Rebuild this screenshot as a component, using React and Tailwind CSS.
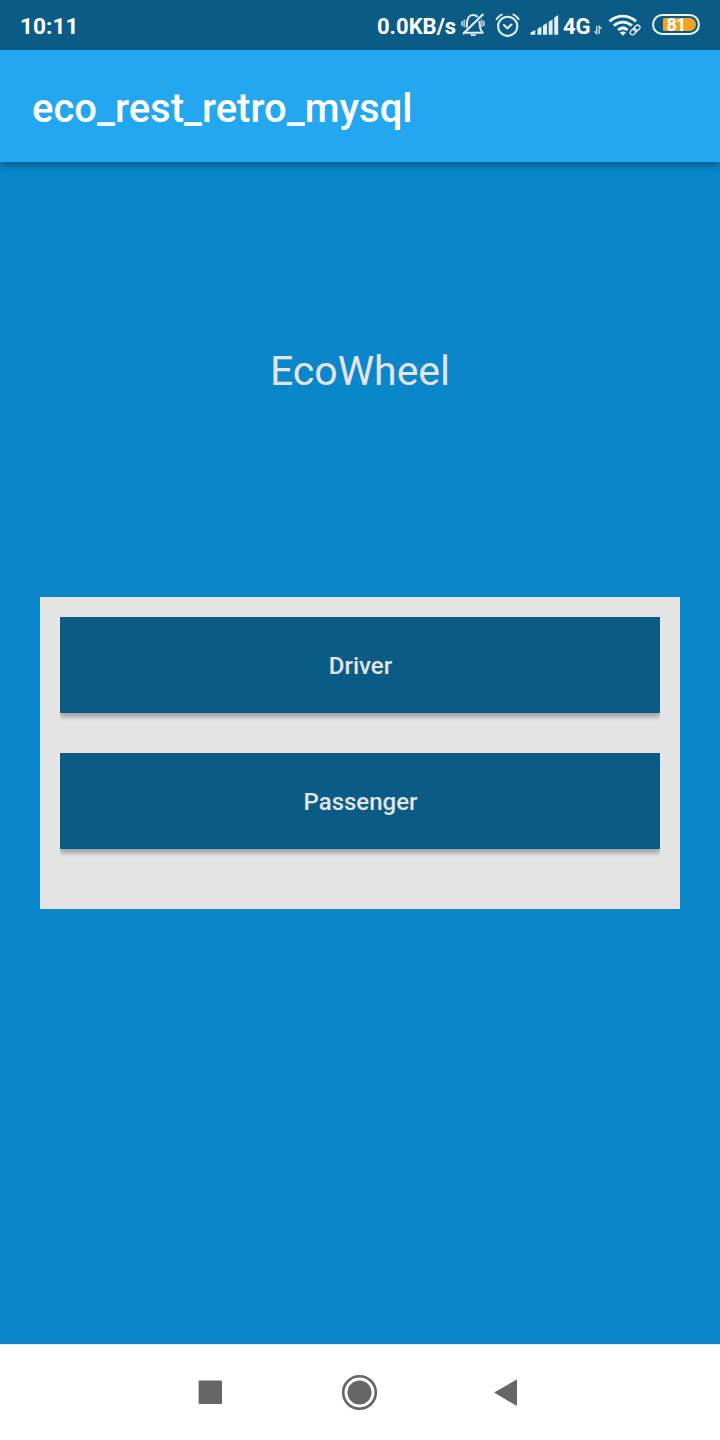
function StatusBar() {
  return (
    <div className="flex h-[50px] shrink-0 bg-[#0a5c87] pl-5 text-[22px] leading-[54px] font-bold text-white">
      <span className="w-[357px] text-[22.7px]">10:11</span>
      <span className="w-[83px] whitespace-nowrap">0.0KB/s</span>
      <svg className="h-[50px] w-[30px] shrink-0" viewBox="460 0 30 50" fill="none" stroke="#e2edf4">
        <path d="M463.5 32.8h20M466.6 28c.6-2.5.3-4.500.5-6.500.4-4.100 3-6.600 6.200-6.600 1.800 0 3.300.7 4.400 2M479.400 21c.5 4-.2 8.500 3.200 11.500" strokeWidth="2" />
        <path d="M463 34 483.300 14" strokeWidth="2.200" />
        <path d="M462 21v5M464.300 19.500v7.500M481.700 19.500v7.500M484 21v5" strokeWidth="1.900" opacity=".7" />
        <path d="M470 34.200h6.500l-1.200 1.900h-4.100z" fill="#e2edf4" stroke="none" />
      </svg>
      <svg className="h-[50px] w-[40px] shrink-0" viewBox="490 0 40 50" fill="none" stroke="#e2edf4" strokeWidth="2.1" strokeLinecap="round">
        <circle cx="507.7" cy="26.3" r="9.6" />
        <path d="m504 25 3.5 3.2 4-3.7M496.7 19c1.3-2 3-3.5 5-4.4M513.5 14.6c2 .9 3.7 2.4 5 4.4" />
      </svg>
      <svg className="h-[50px] w-[33px] shrink-0" viewBox="530 0 33 50" fill="#e2edf4">
        <path d="M530.5 34.700v-2.200l4.800-2.500v4.700zM537.500 34.700v-6l4-2.200v8.200zM543 34.700v-9.200l4-2.500v11.700zM548.600 34.700V21.800l4-2.500v15.400zM554.200 34.700V17.500l4-2.500v19.700z" />
      </svg>
      <span className="w-[29px]">4G</span>
      <svg className="h-[50px] w-[14px] shrink-0" viewBox="592 0 14 50" fill="none" stroke="#c6dbe6" strokeWidth="1.4">
        <path d="M596.7 26v7.500l-2.300-2.200M599.200 34v-7.500l2.300 2.200" />
      </svg>
      <svg className="h-[50px] w-[44px] shrink-0" viewBox="606 0 44 50" fill="none" stroke="#eef5f8">
        <path d="M609.500 21.300c8-6.900 18.500-6.900 26.500 0M613.800 25.700c5.600-4.700 12.500-4.700 18.100 0M618.100 30c3-2.700 6.500-2.700 9.500 0" strokeWidth="2.9" />
        <path d="M619.700 32.500c1.800-1.500 4.600-1.500 6.400 0l-3.200 3.200z" fill="#eef5f8" stroke="none" />
        <g transform="rotate(-45 635 30)" strokeWidth="1.3">
          <rect x="629.200" y="27.700" width="6.800" height="4.600" rx="2.300" />
          <rect x="634.200" y="27.700" width="6.800" height="4.600" rx="2.300" />
        </g>
      </svg>
      <div className="mt-[14px] ml-[2px] flex h-[21px] w-[48px] shrink-0 rounded-full border-2 border-[#eef5f8] pt-[2px] pl-[9px]">
        <span className="h-[13px] w-[33px] rounded-l-[2px] rounded-r-[7px] bg-[#f2a323] pl-[3.5px] text-[18px] leading-[14px] tracking-[-0.8px]">81</span>
      </div>
    </div>
  );
}

function RoleButton({ children }) {
  return (
    <button className="h-24 w-full bg-[#0a5c87] pt-[2px] pl-px text-center text-[24px] leading-[28px] font-medium text-[#e4e4e4] shadow-[0_4px_4px_rgba(0,0,0,0.28)] [clip-path:inset(-1px_0_-12px_0)]">
      {children}
    </button>
  );
}

export default function App() {
  return (
    <div className="flex h-[1440px] w-[720px] flex-col overflow-hidden bg-[#0a86ca] font-['Roboto',sans-serif]">
      <StatusBar />
      <header className="flex h-28 shrink-0 items-center bg-[#22a7f0] px-8 pt-[6px] shadow-[0_3px_8px_rgba(0,0,0,0.35)] [clip-path:inset(0_0_-14px_0)]">
        <h1 className="text-[40px] leading-[48px] font-medium text-white">eco_rest_retro_mysql</h1>
      </header>
      <main className="flex grow flex-col items-center px-10">
        <h2 className="mt-[184px] text-[41px] leading-[51px] text-[#e4e4e4]">EcoWheel</h2>
        <section className="mt-[200px] flex h-[312px] w-full flex-col gap-10 bg-[#e4e4e4] p-5">
          <RoleButton>Driver</RoleButton>
          <RoleButton>Passenger</RoleButton>
        </section>
      </main>
      <nav className="flex h-24 shrink-0 bg-white">
        <svg className="h-24 w-[720px]" viewBox="0 1344 720 96" fill="#666">
          <path d="M0 1344h720v1H0z" fill="#dfeaf0" />
          <rect x="198.6" y="1380.6" width="23.4" height="23.4" rx="1" />
          <circle cx="359.5" cy="1392.5" r="16.3" fill="none" stroke="#666" strokeWidth="2.6" />
          <circle cx="359.5" cy="1392.5" r="12" />
          <path d="M517 1380.3v24.8q0 .8-.8.4l-21.3-12.4q-.8-.5 0-1l21.3-12.3q.8-.4.8.5z" />
        </svg>
      </nav>
    </div>
  );
}
